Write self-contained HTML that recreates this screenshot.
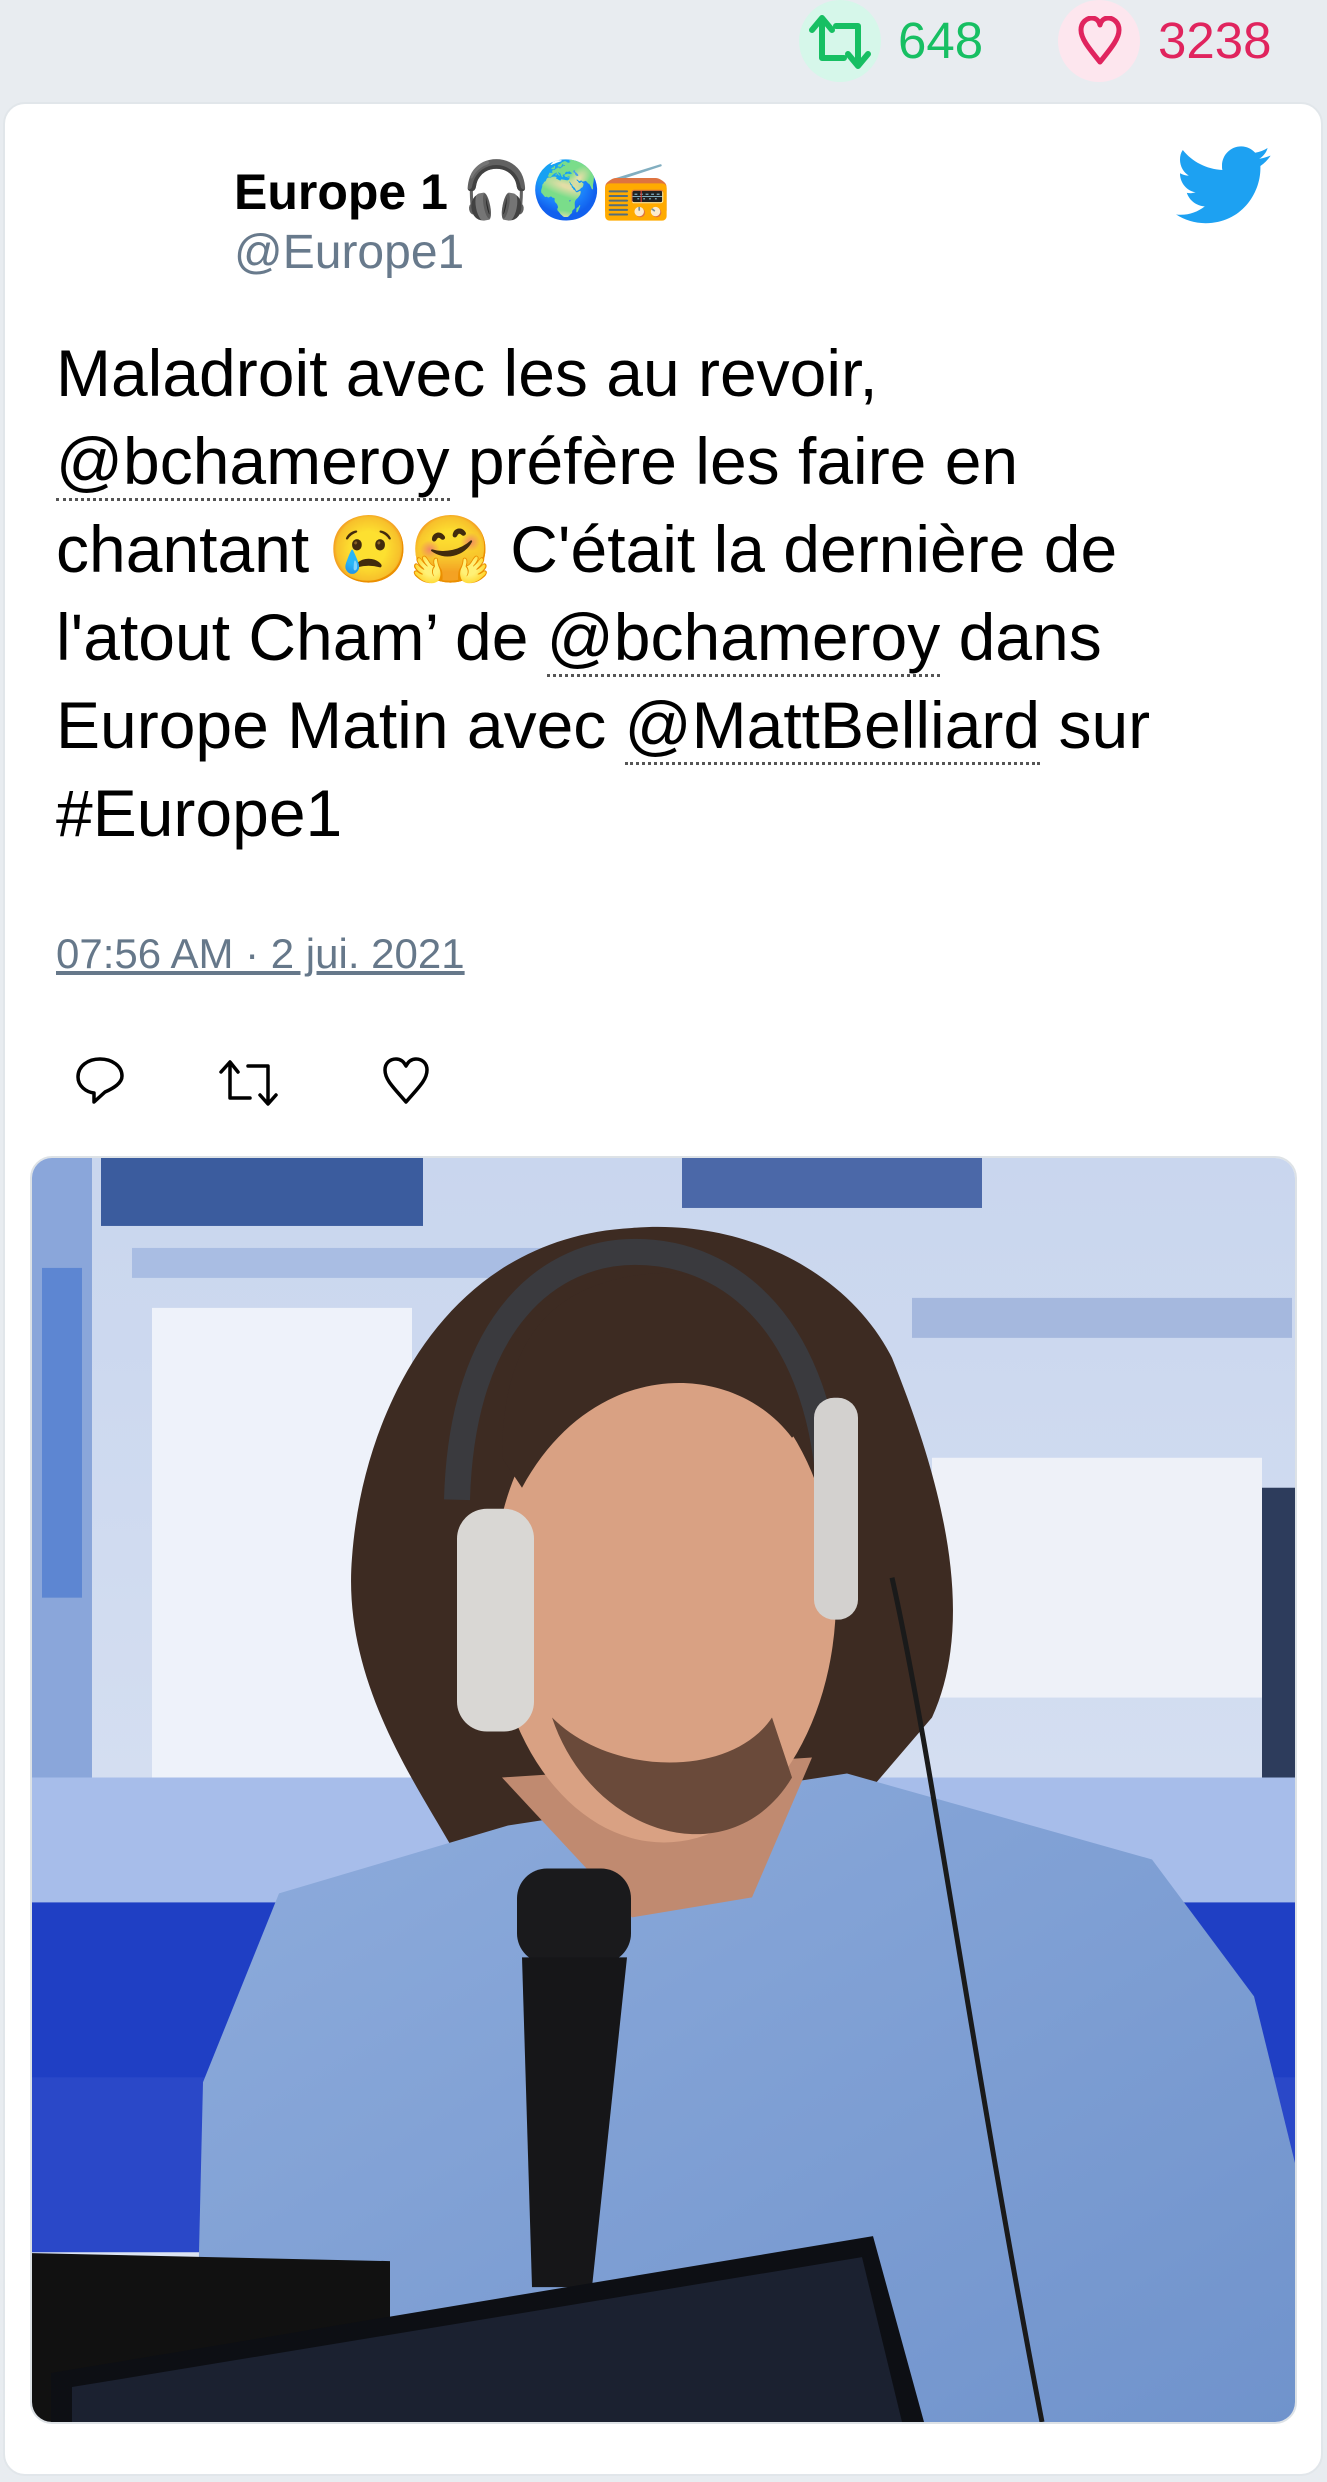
<!DOCTYPE html>
<html><head><meta charset="utf-8"><style>
*{margin:0;padding:0;box-sizing:border-box}
html,body{width:1327px;height:2482px;background:#e8ecf0;overflow:hidden;font-family:"Liberation Sans","Noto Sans CJK JP",sans-serif}
.abs{position:absolute}
.circ{position:absolute;width:82px;height:82px;border-radius:50%}
.cnt{position:absolute;font-size:51px;line-height:82px;top:0}
.card{position:absolute;left:3px;top:102px;width:1320px;height:2374px;background:#fff;border-radius:22px;border:2px solid #e1e6ea}
.name{position:absolute;left:234px;top:160px;font-size:50px;font-weight:bold;color:#000;line-height:60px;white-space:nowrap}
.name .e{font-size:56px;font-weight:normal}
.handle{position:absolute;left:234px;top:224px;font-size:48px;color:#687a8c;line-height:58px}
.text{position:absolute;left:56px;top:329px;width:1200px;font-size:66px;line-height:88px;color:#000}
.m{border-bottom:3px dotted #555;text-decoration:none}
.ts{position:absolute;left:56px;top:929px;font-size:42px;color:#66788a;text-decoration:underline;line-height:50px;white-space:nowrap}
.img{position:absolute;left:30px;top:1156px;width:1267px;height:1268px;border:2px solid #dde2e6;border-radius:22px;overflow:hidden}
</style></head><body>
<div class="circ" style="left:799px;top:0px;background:#d6f7ea"></div>
<svg class="abs" style="left:808px;top:14px" width="64" height="56" viewBox="0 0 64 56"><path d="M14 4 L4 16 M14 4 L24 16 M14 6 V44 H36 M50 52 L40 40 M50 52 L60 40 M50 50 V12 H28" fill="none" stroke="#17bf63" stroke-width="6" stroke-linecap="round" stroke-linejoin="round"/></svg>
<div class="cnt" style="left:898px;color:#17bf63">648</div>
<div class="circ" style="left:1058px;top:0px;background:#fde6ee"></div>
<svg class="abs" style="left:1075px;top:16px" width="50" height="50" viewBox="0 0 50 50"><path d="M25 46 C12 30 6 22 6 14 C6 6 12 2 17 2 C21 2 24 5 25 9 C26 5 29 2 33 2 C38 2 44 6 44 14 C44 22 38 30 25 46Z" fill="none" stroke="#e0245e" stroke-width="5" stroke-linejoin="round"/></svg>
<div class="cnt" style="left:1158px;color:#e0245e">3238</div>

<div class="card"></div>
<div class="name">Europe 1 <span class="e">🎧🌍📻</span></div>
<div class="handle">@Europe1</div>
<svg class="abs" style="left:1176px;top:146px" width="96" height="80" viewBox="0 0 24 20"><path d="M23.6 2.4c-.9.4-1.8.6-2.8.8 1-.6 1.8-1.6 2.1-2.7-.9.6-2 1-3.1 1.2C18.9.7 17.7.1 16.3.1c-2.7 0-4.8 2.200-4.8 4.8 0 .4 0 .8.1 1.1C7.6 5.8 4 3.9 1.7 1 1.2 1.7 1 2.5 1 3.4c0 1.7.9 3.2 2.2 4-.8 0-1.5-.2-2.2-.6v.1c0 2.3 1.7 4.3 3.9 4.7-.4.1-.8.2-1.3.2-.3 0-.6 0-.9-.1.6 1.9 2.4 3.300 4.500 3.400-1.7 1.3-3.7 2.1-6 2.1-.4 0-.8 0-1.2-.1 2.1 1.4 4.7 2.2 7.4 2.2 8.9 0 13.7-7.4 13.7-13.7v-.6c1-.7 1.8-1.5 2.5-2.5z" fill="#1da1f2"/></svg>

<div class="text">Maladroit avec les au revoir,<br><span class="m">@bchameroy</span> préfère les faire en chantant 😢🤗 C'était la dernière de l'atout Cham’ de <span class="m">@bchameroy</span> dans Europe Matin avec <span class="m">@MattBelliard</span> sur #Europe1</div>
<div class="ts">07:56 AM · 2 jui. 2021</div>

<svg class="abs" style="left:74px;top:1056px" width="52" height="50" viewBox="0 0 52 50"><path d="M26 3 C14 3 4 10 4 21 C4 30 12 36 20 37 L20 46 L31 36 C40 32 48 27 48 20 C48 10 38 3 26 3Z" fill="none" stroke="#000" stroke-width="3.5" stroke-linejoin="round"/></svg>
<svg class="abs" style="left:218px;top:1058px" width="64" height="50" viewBox="0 0 64 50"><path d="M12 4 L3 14 M12 4 L20 14 M12 5 V40 H32 M50 46 L42 37 M50 46 L58 37 M50 44 V8 H30" fill="none" stroke="#000" stroke-width="3.5" stroke-linecap="round" stroke-linejoin="round"/></svg>
<svg class="abs" style="left:380px;top:1056px" width="52" height="50" viewBox="0 0 52 50"><path d="M26 46 C14 32 5 24 5 14 C5 7 10 3 16 3 C21 3 24 6 26 10 C28 6 31 3 36 3 C42 3 47 7 47 14 C47 24 38 32 26 46Z" fill="none" stroke="#000" stroke-width="3.5" stroke-linejoin="round"/></svg>

<div class="img"><svg width="1263" height="1264" viewBox="0 0 1263 1265" preserveAspectRatio="none">
<defs><linearGradient id="bg" x1="0" y1="0" x2="0" y2="1"><stop offset="0" stop-color="#c9d6ee"/><stop offset="1" stop-color="#dfe6f4"/></linearGradient>
<linearGradient id="sh" x1="0" y1="0" x2="1" y2="1"><stop offset="0" stop-color="#8eacdc"/><stop offset="1" stop-color="#7093cc"/></linearGradient></defs>
<rect width="1263" height="1265" fill="url(#bg)"/>
<rect x="0" y="0" width="60" height="640" fill="#8aa6da"/>
<rect x="10" y="110" width="40" height="330" fill="#5d86d2"/>
<rect x="69" y="0" width="322" height="68" fill="#3b5c9e"/>
<rect x="650" y="0" width="300" height="50" fill="#4b68a8"/>
<rect x="100" y="90" width="540" height="30" fill="#a9bde3"/>
<rect x="120" y="150" width="260" height="470" fill="#eef2fa"/>
<rect x="880" y="140" width="380" height="40" fill="#a5b8de"/>
<rect x="900" y="300" width="330" height="240" fill="#eef1f8"/>
<rect x="1230" y="330" width="33" height="360" fill="#2d3c5c"/>
<rect x="0" y="620" width="1263" height="130" fill="#a7bdea"/>
<rect x="0" y="745" width="1263" height="350" fill="#1f3fc4"/>
<rect x="0" y="920" width="1263" height="175" fill="#2a48c8"/>
<path d="M600 70 C410 80 330 260 320 400 C310 520 380 620 420 690 L520 720 L780 700 L900 560 C950 450 900 300 860 200 C820 120 720 60 600 70Z" fill="#3d2b22"/>
<path d="M247 736 L476 668 L815 616 L1120 702 L1222 839 L1264 1010 L1264 1265 L163 1265 L171 925Z" fill="url(#sh)"/>
<path d="M470 620 L600 760 L720 740 L780 600Z" fill="#c08a70"/>
<ellipse cx="632" cy="440" rx="172" ry="245" fill="#d9a183"/>
<path d="M470 300 C470 160 540 120 630 115 C720 115 780 170 790 250 L760 280 C700 200 560 200 490 330Z" fill="#3d2b22"/>
<path d="M520 560 C560 680 700 720 760 620 L740 560 C700 620 580 620 520 560Z" fill="#6a4a3a"/>
<path d="M425 342 C430 160 520 94 603 94 C700 94 790 170 798 342" fill="none" stroke="#3a3a3e" stroke-width="26"/>
<rect x="425" y="351" width="77" height="223" rx="30" fill="#d9d7d4"/>
<rect x="782" y="240" width="44" height="222" rx="20" fill="#d3d1cf"/>
<path d="M860 420 C900 600 940 900 1010 1265" fill="none" stroke="#1a1a1a" stroke-width="5"/>
<rect x="485" y="711" width="114" height="95" rx="30" fill="#1a1a1c"/>
<path d="M490 800 L595 800 L560 1130 L500 1130Z" fill="#161618"/>
<path d="M0 1096 L358 1104 L358 1265 L0 1265Z" fill="#111"/>
<path d="M19 1216 L841 1079 L892 1265 L19 1265Z" fill="#0d0f14"/>
<path d="M40 1230 L830 1100 L870 1265 L40 1265Z" fill="#1b2130"/>
</svg></div>
</body></html>
